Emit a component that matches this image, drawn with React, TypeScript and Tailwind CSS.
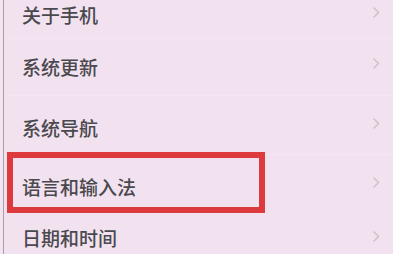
import React from "react"

const Chevron = ({ className = "" }: { className?: string }) => (
  <svg width="8" height="13" viewBox="0 0 8 13" className={className}>
    <polyline points="1.5,1.5 6.5,6.5 1.5,11.5" fill="none" stroke="#c9bfc8" strokeWidth="1.4" />
  </svg>
)

function Row({ label, rowClass, chevClass, children }: { label: string; rowClass: string; chevClass: string; children?: React.ReactNode }) {
  return (
    <div className={"relative flex justify-between pl-[18px] pr-[13px] " + rowClass}>
      <span className="text-[19px] leading-[19px] font-medium text-[#4a494e]">{label}</span>
      <Chevron className={chevClass} />
      {children}
    </div>
  )
}

export default function App() {
  return (
    <div className="w-[393px] h-[254px] overflow-hidden bg-[#f3e4f1] pl-[3px]" style={{ fontFamily: '"Noto Sans CJK SC", "Noto Sans", sans-serif' }}>
      <div className="h-full border-l-[1.5px] border-[#a7a0a6] bg-[#f2e2f0] flex flex-col">
        <Row label="关于手机" rowClass="h-[38px] items-start pt-[5px]" chevClass="mt-[1px]" />
        <div className="h-px bg-[#f4e6f2]" />
        <Row label="系统更新" rowClass="h-[56px] items-center" chevClass="mt-[-6px]" />
        <div className="h-px bg-[#f4e6f2]" />
        <Row label="系统导航" rowClass="h-[59px] items-center pt-[4px]" chevClass="mt-[-8px]" />
        <div className="h-px bg-[#f4e6f2]" />
        <Row label="语言和输入法" rowClass="h-[59px] items-center pt-[4px]" chevClass="mt-[-8px]">
          <div className="absolute left-[3px] top-[-3px] w-[258px] h-[61px] border-[6px] border-[#dd3a3e]" />
        </Row>
        <Row label="日期和时间" rowClass="h-[40px] items-center pt-[6px]" chevClass="mt-[-2px]" />
      </div>
    </div>
  )
}
